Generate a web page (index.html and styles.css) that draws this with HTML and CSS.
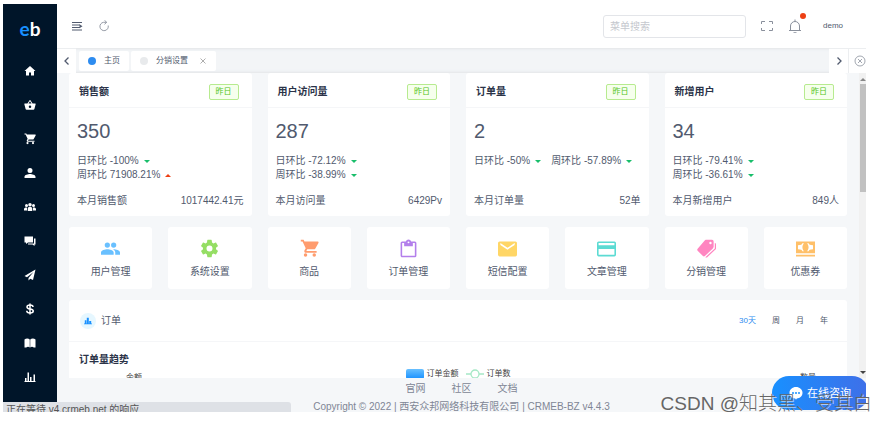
FILE: index.html
```html
<!DOCTYPE html>
<html>
<head>
<meta charset="utf-8">
<title>CRMEB</title>
<link rel="stylesheet" href="styles.css">
</head>
<body>
<div class="screen">
<div class="app">
  <nav class="sidebar" aria-label="Menu">
    <a class="logo" href="#"><span class="logo-e">e</span>b</a>
    <a class="nav-item" href="#" aria-label="Home"><svg viewBox="0 0 24 24"><path d="M12 2 1 12h3v9h6v-6h4v6h6v-9h3z"/></svg></a>
    <a class="nav-item" href="#" aria-label="Goods"><svg viewBox="0 0 24 24"><path d="M17.2 9 12.8 2.4c-.4-.6-1.200-.6-1.600 0L6.800 9H1.500c-.6 0-1 .5-.9 1.100l2.600 10c.2.9 1 1.500 1.900 1.500h13.800c.9 0 1.700-.6 1.900-1.500l2.600-10c.1-.6-.3-1.100-.9-1.100zM9 9l3-4.400L15 9zm3 9a2 2 0 1 1 0-5 2 2 0 0 1 0 5z"/></svg></a>
    <a class="nav-item" href="#" aria-label="Orders"><svg viewBox="0 0 24 24"><use href="#cart"/></svg></a>
    <a class="nav-item" href="#" aria-label="Users"><svg viewBox="0 0 24 24"><path d="M12 12a5 5 0 1 0 0-10 5 5 0 0 0 0 10zm0 2c-4 0-11 2-11 5.500V22h22v-2.500C23 16 16 14 12 14z"/></svg></a>
    <a class="nav-item" href="#" aria-label="Groups"><svg viewBox="0 0 24 24"><circle cx="12" cy="7.500" r="3.500"/><circle cx="5" cy="9" r="3"/><circle cx="19" cy="9" r="3"/><path d="M7.500 20v-5c0-2 2-3.500 4.500-3.500s4.500 1.500 4.500 3.500v5zM0 19v-3c0-2 2-3.200 6-3v6zm18 0v-6c4-.2 6 1 6 3v3z"/></svg></a>
    <a class="nav-item" href="#" aria-label="Messages"><svg viewBox="0 0 24 24"><path d="M1 3h17v12H8l-4 3v-3H1zM20 7h3v12h-2v3l-4-3H8v-2h12z"/></svg></a>
    <a class="nav-item" href="#" aria-label="Marketing"><svg viewBox="0 0 24 24"><path d="M23 1 1 14l5 2.500L19 6 9 18v5l3.500-3.500L18 22z"/></svg></a>
    <a class="nav-item" href="#" aria-label="Finance"><svg viewBox="0 0 24 24"><path d="M18 8c0-2.500-2-4-6-4S6 5.500 6 8s2 3.500 6 4 6.500 1.500 6.500 4-2.500 4-6.500 4-6.500-1.500-6.500-4.500M12 1v22" fill="none" stroke="currentColor" stroke-width="3"/></svg></a>
    <a class="nav-item" href="#" aria-label="Content"><svg viewBox="0 0 24 24"><path d="M1 5c3-3 8-3 10.500 0v16c-2-2-5-2-7 0H1zM23 5c-3-3-8-3-10.500 0v16c2-2 5-2 7 0H23z"/></svg></a>
    <a class="nav-item" href="#" aria-label="Statistics"><svg viewBox="0 0 24 24"><path d="M2 14h3v6H2zM7 3h3v17H7zM12 12h3v8h-3zM19 7h3v13h-3zM1 20h22v2H1z"/></svg></a>
  </nav>

  <div class="main">
    <header class="topbar">
      <button class="icon-btn dark" aria-label="Collapse"><svg viewBox="0 0 12 12"><path d="M1 2.500h10M1 5h8M1 7.500h8M1 10h10" fill="none" stroke="currentColor"/><path d="M8.500 4.200v4.100L11.500 6.250z"/></svg></button>
      <button class="icon-btn" aria-label="Refresh"><svg viewBox="0 0 12 12"><path d="M10.200 5.500A4.200 4.200 0 1 1 5.500 2.300H8.500M6.500.3l2.200 2-2.200 2" fill="none" stroke="currentColor" stroke-width=".9"/></svg></button>
      <input class="search" type="text" placeholder="菜单搜索" aria-label="菜单搜索">
      <button class="icon-btn" aria-label="Fullscreen"><svg viewBox="0 0 12 12"><path d="M.5 4V1.500H4M8 1.500h3.500V4M11.500 8v2.500H8M4 10.500H.5V8" fill="none" stroke="currentColor"/></svg></button>
      <button class="icon-btn bell" aria-label="Notifications"><svg viewBox="0 0 14 14"><path d="M1 11.500h12M2.500 11.500V7a4.500 4.500 0 0 1 9 0v4.500M7 .5v2M5.500 13a1.700 1.700 0 0 0 3 0" fill="none" stroke="currentColor"/></svg><span class="badge"></span></button>
      <a class="user" href="#">demo</a>
    </header>

    <div class="tabs">
      <button class="tab-arrow" aria-label="Previous"><svg viewBox="0 0 10 10"><path d="M6.500 1.500 3 5l3.500 3.500" fill="none" stroke="currentColor" stroke-width="1.300"/></svg></button>
      <div class="tab-list">
        <a class="tab" href="#"><span class="dot active"></span>主页</a>
        <a class="tab" href="#"><span class="dot"></span>分销设置<svg class="tab-close" viewBox="0 0 8 8"><path d="m1.500 1.500 5 5m0-5-5 5" fill="none" stroke="currentColor" stroke-width=".8"/></svg></a>
      </div>
      <button class="tab-arrow" aria-label="Next"><svg viewBox="0 0 10 10"><path d="M3.500 1.500 7 5 3.500 8.500" fill="none" stroke="currentColor" stroke-width="1.300"/></svg></button>
      <button class="tab-arrow tab-end" aria-label="Close all"><svg viewBox="0 0 12 12"><circle cx="6" cy="6" r="5"/><path d="m4 4 4 4m0-4-4 4"/></svg></button>
    </div>

    <div class="viewport">
      <main class="content">
        <section class="stats">
          <article class="card stat">
            <div class="stat-head"><h2>销售额</h2><span class="tag">昨日</span></div>
            <div class="stat-body"><div class="figure">350</div>
              <div class="rates"><span>日环比 -100%<i class="down"></i></span><span>周环比 71908.21%<i class="up"></i></span></div>
              <div class="total"><span>本月销售额</span><span>1017442.41元</span></div></div>
          </article>
          <article class="card stat">
            <div class="stat-head"><h2>用户访问量</h2><span class="tag">昨日</span></div>
            <div class="stat-body"><div class="figure">287</div>
              <div class="rates"><span>日环比 -72.12%<i class="down"></i></span><span>周环比 -38.99%<i class="down"></i></span></div>
              <div class="total"><span>本月访问量</span><span>6429Pv</span></div></div>
          </article>
          <article class="card stat">
            <div class="stat-head"><h2>订单量</h2><span class="tag">昨日</span></div>
            <div class="stat-body"><div class="figure">2</div>
              <div class="rates"><span>日环比 -50%<i class="down"></i></span><span>周环比 -57.89%<i class="down"></i></span></div>
              <div class="total"><span>本月订单量</span><span>52单</span></div></div>
          </article>
          <article class="card stat">
            <div class="stat-head"><h2>新增用户</h2><span class="tag">昨日</span></div>
            <div class="stat-body"><div class="figure">34</div>
              <div class="rates"><span>日环比 -79.41%<i class="down"></i></span><span>周环比 -36.61%<i class="down"></i></span></div>
              <div class="total"><span>本月新增用户</span><span>849人</span></div></div>
          </article>
        </section>

        <section class="shortcuts">
          <a class="card shortcut" href="#"><svg class="blue" viewBox="0 0 24 24"><path d="M16 11a3.300 3.300 0 1 0 0-6.600 3.300 3.300 0 0 0 0 6.600zm-8 0a3.300 3.300 0 1 0 0-6.600A3.300 3.300 0 0 0 8 11zm0 2c-2.700 0-8 1.300-8 4v3h16v-3c0-2.700-5.300-4-8-4zm8 0-1 .1c1.500.9 3 2 3 3.900v3h6v-3c0-2.700-5.300-4-8-4z"/></svg>用户管理</a>
          <a class="card shortcut" href="#"><svg class="green" viewBox="0 0 24 24"><path d="M20.200 13a8 8 0 0 0 0-2l2.300-1.800c.2-.2.300-.5.100-.7l-2.200-3.800c-.1-.3-.4-.3-.7-.2l-2.700 1.100a8 8 0 0 0-1.800-1.100l-.4-2.900a.5.5 0 0 0-.5-.5H9.700a.5.5 0 0 0-.5.5l-.4 2.900A8 8 0 0 0 7 5.600L4.300 4.500c-.3-.1-.6 0-.7.2L1.400 8.500c-.1.200-.1.500.1.700L3.800 11a8 8 0 0 0 0 2l-2.300 1.800c-.2.200-.2.500-.1.700l2.200 3.800c.1.300.4.300.7.200L7 18.400a8 8 0 0 0 1.800 1.100l.4 2.900c0 .3.200.5.500.5h4.600c.3 0 .5-.2.500-.5l.4-2.900a8 8 0 0 0 1.800-1.100l2.700 1.100c.3.100.6.100.7-.2l2.200-3.800c.1-.2.100-.5-.1-.7zM12 15.800a3.800 3.800 0 1 1 0-7.600 3.800 3.800 0 0 1 0 7.600z"/></svg>系统设置</a>
          <a class="card shortcut" href="#"><svg class="orange" viewBox="0 0 24 24"><path id="cart" d="M7 18a2.200 2.200 0 1 0 0 4.400A2.200 2.200 0 0 0 7 18zM1 1v2.200h2.200l4 8.400-1.500 2.700c-.8 1.500.3 3.200 1.900 3.200H21v-2.200H8l1.200-2.200h8.300c.8 0 1.500-.4 1.900-1.100l3.900-7.100c.4-.7-.1-1.700-1-1.700H5.600l-1-2.200zM18 18a2.200 2.200 0 1 0 0 4.400 2.200 2.200 0 0 0 0-4.400z"/></svg>商品</a>
          <a class="card shortcut" href="#"><svg class="purple" viewBox="0 0 24 24"><path fill-rule="evenodd" d="M20 3h-4.600a3.600 3.600 0 0 0-6.800 0H4a2 2 0 0 0-2 2v16c0 1.100.9 2 2 2h16a2 2 0 0 0 2-2V5a2 2 0 0 0-2-2zm-8 0a1.200 1.200 0 1 1 0 2.400A1.200 1.200 0 0 1 12 3zm8 18H4V5h2.500v4h11V5H20z"/></svg>订单管理</a>
          <a class="card shortcut" href="#"><svg class="yellow" viewBox="0 0 24 24"><path d="M22 3H2a2 2 0 0 0-2 2v15c0 1.100.9 2 2 2h20a2 2 0 0 0 2-2V5a2 2 0 0 0-2-2zm-1 4.500-9 6-9-6V5.200l9 6 9-6z"/></svg>短信配置</a>
          <a class="card shortcut" href="#"><svg class="teal" viewBox="0 0 24 24"><path fill-rule="evenodd" d="M22 3H2a2 2 0 0 0-2 2v15c0 1.100.9 2 2 2h20a2 2 0 0 0 2-2V5a2 2 0 0 0-2-2zm0 17H2v-7.500h20zm0-12H2V5h20z"/></svg>文章管理</a>
          <a class="card shortcut" href="#"><svg class="pink" viewBox="0 0 24 24"><path fill-rule="evenodd" d="M11 1h8a2 2 0 0 1 2 2v7l-1 2-10 9.500c-.8.7-1.800.7-2.500 0L.8 14.700c-.7-.8-.7-1.700 0-2.500L10 1.500zM17 3.500a1.500 1.500 0 1 0 0 3 1.500 1.500 0 0 0 0-3z"/><path d="M22.500 5c1 0 1.500.8 1.500 2v5.500L13 23c-.8.7-1.700.7-2.500 0L22.500 12z"/></svg>分销管理</a>
          <a class="card shortcut" href="#"><svg class="amber" viewBox="0 0 24 24"><path fill-rule="evenodd" d="M0 3h24v15H0zm8 2.500C8 7 6 8 2.500 8v5C6 13 8 14 8 15.500h2C7.500 12.500 7.500 8.500 10 5.500zm6 0c2.500 3 2.500 7 0 10h2c0-1.500 2-2.500 5.500-2.500V8C18 8 16 7 16 5.500zM0 20h24v2H0z"/></svg>优惠券</a>
        </section>

        <section class="card orders">
          <div class="orders-head">
            <span class="orders-icon"><svg viewBox="0 0 10 10"><path d="M1 4h2v4H1zM3.500 1h2.500v7H3.500zM6.500 5H9v3H6.500zM0 8h10v1H0z"/></svg></span>
            <span class="orders-name">订单</span>
            <button class="range on">30天</button><button class="range">周</button><button class="range">月</button><button class="range">年</button>
          </div>
          <div class="orders-body">
            <h2>订单量趋势</h2>
            <div class="chart-top">
              <span class="axis">金额</span>
              <span class="legend"><i class="swatch"></i>订单金额</span>
              <span class="legend"><svg class="line-mark" viewBox="0 0 18 10"><path d="M0 5h5M13 5h5"/><circle cx="9" cy="5" r="4"/></svg>订单数</span>
              <span class="axis axis-right">数量</span>
            </div>
          </div>
        </section>
      </main>
      <div class="scrollbar" aria-hidden="true"><span class="arrow-up"></span><span class="thumb"></span><span class="arrow-down"></span></div>
    </div>

    <footer class="footer">
      <div class="links"><a href="#">官网</a><a href="#">社区</a><a href="#">文档</a></div>
      <div>Copyright © 2022 | 西安众邦网络科技有限公司 | CRMEB-BZ v4.4.3</div>
    </footer>
  </div>

  <div class="status">正在等待 v4.crmeb.net 的响应</div>
  <button class="chat"><svg viewBox="0 0 14 14"><path d="M7 1C3.400 1 .5 3.500.5 6.700s2.500 5.600 5.700 5.800L7 13.800l.8-1.300c3.200-.2 5.700-2.600 5.700-5.800S10.600 1 7 1z" fill="#fff"/><circle cx="4" cy="7" r="1"/><circle cx="7" cy="7" r="1"/><circle cx="10" cy="7" r="1"/></svg>在线咨询</button>
</div>
<div class="watermark">CSDN @知其黑、受其白</div>
</div>
</body>
</html>
```
FILE: styles.css
```css
* { box-sizing: border-box; }

body {
  margin: 0;
  height: 100vh;
  padding: 4px 0 11px 3px;
  background: #fff;
  color: #515a6e;
  font: 10px/14px "Liberation Sans", "Noto Sans CJK SC", sans-serif;
}

a { color: inherit; text-decoration: none; }
h2 { margin: 0; font-size: 10px; line-height: 14px; color: #2b3348; }
svg { display: block; fill: currentColor; }
button { border: 0; padding: 0; background: none; color: inherit; font: inherit; }

.screen { position: relative; height: 100%; overflow: hidden; }

.app {
  position: relative;
  display: flex;
  height: 100%;
  margin-right: 20px;
  overflow: hidden;
}

.sidebar {
  width: 54px;
  flex: none;
  display: flex;
  flex-direction: column;
  background: #001529;
  color: #fff;
}

.logo {
  height: 50px;
  display: flex;
  align-items: center;
  justify-content: center;
  font: bold 19px/20px Lato, sans-serif;
}
.logo-e { color: #1890ff; }

.nav-item {
  height: 34px;
  display: flex;
  align-items: center;
  justify-content: center;
}
.nav-item svg { width: 12px; height: 12px; }

.main {
  flex: 1;
  min-width: 0;
  display: flex;
  flex-direction: column;
  background: #f5f7f9;
}

.topbar {
  height: 44px;
  flex: none;
  display: flex;
  align-items: center;
  gap: 15px;
  padding: 0 23px 0 14px;
  background: #fff;
}
.icon-btn { width: 12px; color: #8a909c; }
.icon-btn svg { width: 12px; }
.icon-btn.dark { color: #515a6e; }
.icon-btn.bell { position: relative; width: 14px; }
.icon-btn.bell svg { width: 14px; }
.badge {
  position: absolute;
  top: -6px;
  right: -4px;
  width: 6px;
  height: 6px;
  border-radius: 50%;
  background: #ed4014;
}
.search {
  width: 143px;
  height: 23px;
  margin-left: auto;
  padding: 0 6px;
  border: 1px solid #e3e5e9;
  border-radius: 3px;
  font: inherit;
  color: inherit;
}
.search::placeholder { color: #c5c8ce; }
.user { margin-left: 6px; font-size: 8px; }

.tabs {
  height: 25px;
  flex: none;
  display: flex;
  background: #f3f5f7;
  box-shadow: inset 0 0 3px 1px #e2e4e7;
}
.tab-arrow {
  width: 19px;
  display: flex;
  align-items: center;
  justify-content: center;
  background: #fff;
  border-top: 1px solid #eceef0;
}
.tab-arrow svg { width: 10px; }
.tab-end {
  width: 18px;
  padding-left: 4px;
  border-left: 1px solid #eceef0;
  color: #8a909c;
}
.tab-end svg { width: 12px; flex: none; fill: none; stroke: currentColor; stroke-width: .8; }
.tab-list {
  flex: 1;
  display: flex;
  gap: 2px;
  padding: 3px 3px 2px;
}
.tab {
  display: flex;
  align-items: center;
  gap: 8px;
  padding: 0 9px;
  border-radius: 2px;
  background: #fff;
  font-size: 8px;
}
.dot { width: 8px; height: 8px; border-radius: 50%; background: #e8eaec; }
.dot.active { background: #2d8cf0; }
.tab-close { width: 8px; margin-left: 3px; color: #999; }

.viewport { flex: 1; min-height: 0; display: flex; }
.content {
  flex: 1;
  min-width: 0;
  overflow: hidden;
  display: flex;
  flex-direction: column;
  gap: 11px;
  padding: 0 12px;
}
.card { background: #fff; border-radius: 3px; }

.stats { display: grid; grid-template-columns: repeat(4, 1fr); gap: 16px; }
.stat { height: 143px; }
.stat-head {
  height: 35px;
  display: flex;
  align-items: center;
  justify-content: space-between;
  padding: 3px 13px 0 10px;
  border-bottom: 1px solid #f5f6f8;
}
.tag {
  padding: 0 6px;
  border: 1px solid #b7eb8f;
  border-radius: 2px;
  background: #f6ffed;
  color: #52c41a;
  font-size: 8px;
}
.stat-body { padding: 11px 8px 0; }
.figure { font-size: 20px; line-height: 24px; }
.rates {
  display: flex;
  flex-wrap: wrap;
  align-content: flex-start;
  column-gap: 10px;
  height: 28px;
  margin: 11px 0 12px;
}
.rates span { display: flex; align-items: center; gap: 5px; }
.up, .down { border: 3px solid transparent; }
.down { border-top-color: #19be6b; border-bottom: 0; }
.up { border-bottom-color: #ed4014; border-top: 0; }
.total { display: flex; justify-content: space-between; }

.shortcuts { display: grid; grid-template-columns: repeat(8, 1fr); gap: 16px; }
.shortcut {
  height: 62px;
  display: flex;
  flex-direction: column;
  align-items: center;
  gap: 7px;
  padding-top: 12px;
}
.shortcut svg { width: 19px; height: 19px; }
.blue { color: #69c0ff; }
.green { color: #95de64; }
.orange { color: #ff9c6e; }
.purple { color: #b37feb; }
.yellow { color: #ffd666; }
.teal { color: #5cdbd3; }
.pink { color: #ff85c0; }
.amber { color: #ffc069; }

.orders { flex: none; }
.orders-head {
  height: 42px;
  display: flex;
  align-items: center;
  gap: 16px;
  padding: 0 19px 0 11px;
  border-bottom: 1px solid #f5f6f8;
}
.orders-icon {
  width: 16px;
  height: 16px;
  display: grid;
  place-items: center;
  border-radius: 50%;
  background: #e6f7ff;
  color: #1890ff;
}
.orders-icon svg { width: 8px; }
.orders-name { margin: 0 auto 0 -11px; }
.range { font-size: 8px; }
.range.on { color: #2d8cf0; }
.orders-body { padding: 11px 10px 0; }
.chart-top {
  display: flex;
  align-items: flex-start;
  gap: 7px;
  color: #444;
  font-size: 8px;
}
.axis { flex: 1; padding: 4px 0 0 47px; }
.axis-right { padding: 4px 21px 0 26px; text-align: right; }
.legend { display: flex; align-items: center; gap: 3px; }
.swatch { width: 18px; height: 10px; border-radius: 2px; background: linear-gradient(#69c0ff, #1890ff); }
.line-mark { width: 18px; height: 10px; fill: #fff; stroke: #a5e8c6; stroke-width: 1.3; }

.scrollbar {
  width: 7px;
  display: flex;
  flex-direction: column;
  align-items: flex-end;
  background: #f1f1f1;
}
.arrow-up, .arrow-down { border: 3px solid transparent; }
.arrow-up { margin: 5px 0 3px; border-top: 0; border-bottom-color: #888; }
.arrow-down { margin: auto 0 4px; border-bottom: 0; border-top-color: #444; }
.thumb { width: 6px; height: 108px; background: #c1c1c1; }

.footer {
  height: 34px;
  flex: none;
  padding-top: 4px;
  text-align: center;
  color: #808695;
}
.links { display: flex; justify-content: center; gap: 26px; margin-bottom: 4px; }

.status {
  position: absolute;
  left: 0;
  bottom: 0;
  width: 288px;
  height: 10px;
  padding: 1px 3px 0;
  overflow: hidden;
  border-top-right-radius: 3px;
  background: #dee1e6;
  color: #555;
}
.chat {
  position: absolute;
  right: -3px;
  bottom: 2px;
  height: 34px;
  display: flex;
  align-items: center;
  gap: 4px;
  padding: 0 18px 0 17px;
  border-radius: 17px;
  background: linear-gradient(90deg, #1890ff, #3f6fe8);
  color: #fff;
  font-size: 11px;
}
.chat svg { width: 14px; fill: #1890ff; }
.watermark {
  position: absolute;
  right: 14px;
  bottom: -6px;
  color: #666;
  font-size: 19px;
  font-weight: 300;
  line-height: 28px;
  text-shadow: 1px 1px 0 rgba(255, 255, 255, .6);
  white-space: nowrap;
}
```
